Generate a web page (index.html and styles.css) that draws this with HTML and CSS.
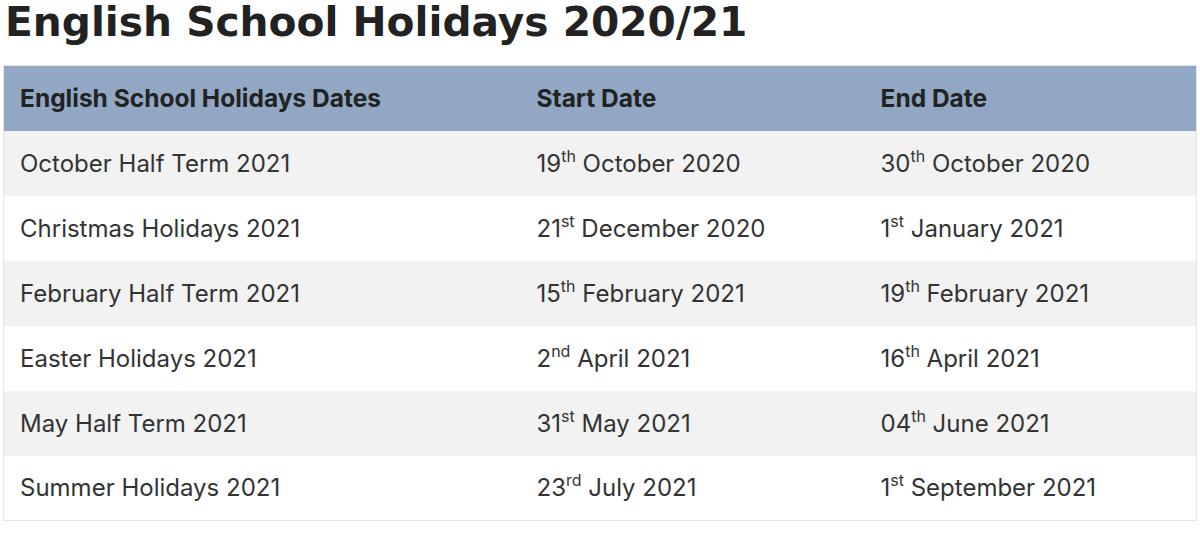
FILE: index.html
```html
<!DOCTYPE html>
<html lang="en">
<head>
<meta charset="utf-8">
<title>English School Holidays 2020/21</title>
<link rel="stylesheet" href="styles.css">
</head>
<body>
<h1 class="title">English School Holidays 2020/21</h1>
<table class="holidays">
  <thead>
    <tr><th class="c1">English School Holidays Dates</th><th class="c2">Start Date</th><th class="c3">End Date</th></tr>
  </thead>
  <tbody>
    <tr><td>October Half Term 2021</td><td>19<sup>th</sup> October 2020</td><td>30<sup>th</sup> October 2020</td></tr>
    <tr><td>Christmas Holidays 2021</td><td>21<sup>st</sup> December 2020</td><td>1<sup>st</sup> January 2021</td></tr>
    <tr><td>February Half Term 2021</td><td>15<sup>th</sup> February 2021</td><td>19<sup>th</sup> February 2021</td></tr>
    <tr><td>Easter Holidays 2021</td><td>2<sup>nd</sup> April 2021</td><td>16<sup>th</sup> April 2021</td></tr>
    <tr><td>May Half Term 2021</td><td>31<sup>st</sup> May 2021</td><td>04<sup>th</sup> June 2021</td></tr>
    <tr><td>Summer Holidays 2021</td><td>23<sup>rd</sup> July 2021</td><td>1<sup>st</sup> September 2021</td></tr>
  </tbody>
</table>
</body>
</html>
```
FILE: styles.css
```css
html, body { margin: 0; padding: 0; background: #fff; }
body { padding: 0 3px; font-family: Inter, Roboto, "Liberation Sans", sans-serif; color: #333; }
.title {
  margin: 0 0 20px 2px;
  font-family: "DejaVu Sans", sans-serif;
  font-weight: bold;
  font-size: 40.7px;
  line-height: 45px;
  color: #222;
}
.holidays {
  width: 1194px;
  border-collapse: collapse;
  border: 1px solid #e6e6e6;
}
.holidays th, .holidays td {
  height: 65px;
  padding: 0 16px;
  text-align: left;
  vertical-align: middle;
  font-size: 24px;
  box-sizing: border-box;
}
.holidays th { background: #91a7c3; font-weight: 700; font-size: 24.5px; color: #222; }
.holidays tbody tr:nth-child(odd) { background: #f2f2f2; }
.holidays tbody tr:nth-child(even) { background: #fff; }
.c1 { width: 517px; }
.c2 { width: 344px; }
.holidays sup { font-size: 16px; line-height: 0; vertical-align: 10px; }
```
